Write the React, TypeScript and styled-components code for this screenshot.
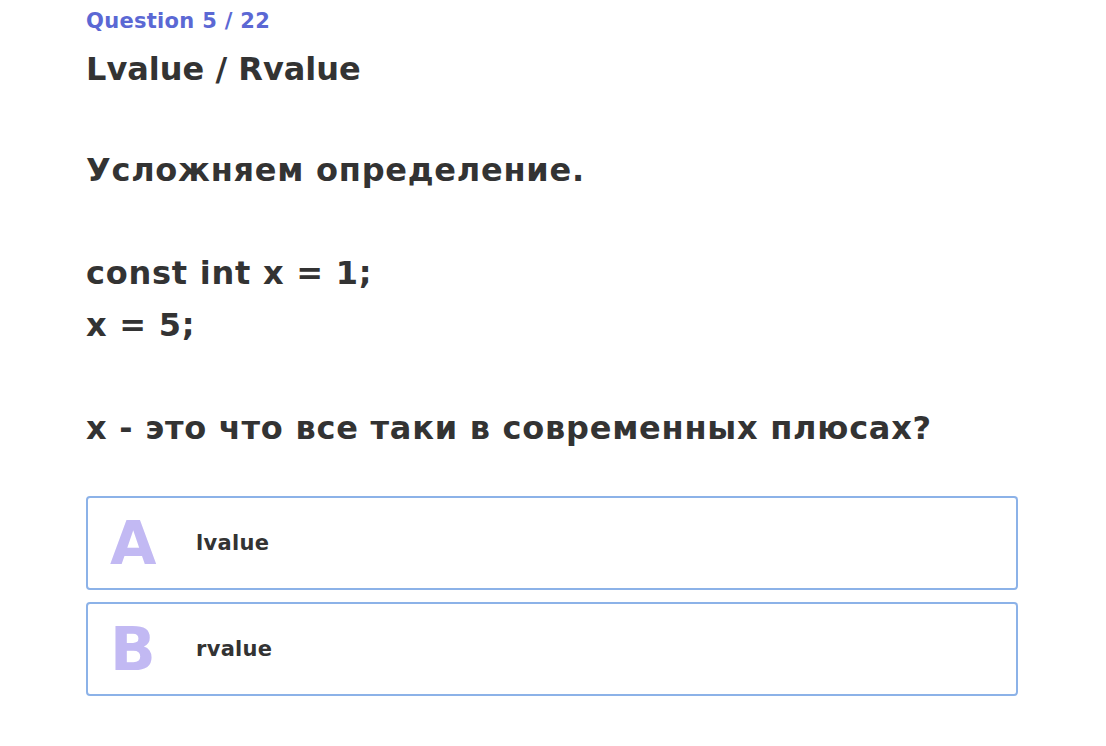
import React from "react";
import styled, { createGlobalStyle } from "styled-components";

const GlobalStyle = createGlobalStyle`
  html, body {
    margin: 0;
    padding: 0;
    background: #ffffff;
  }
  body {
    font-family: "DejaVu Sans", "Open Sans", sans-serif;
    color: #333333;
  }
`;

const Page = styled.main`
  width: 932px;
  padding: 6px 0 0 86px;
  display: flex;
  flex-direction: column;
`;

const Counter = styled.div`
  font-size: 21px;
  line-height: 30px;
  font-weight: 700;
  letter-spacing: 0.3px;
  color: #5b68d4;
`;

const Title = styled.h1`
  margin: 11px 0 0;
  font-size: 32px;
  line-height: 44px;
  font-weight: 700;
  color: #333333;
`;

const Body = styled.div`
  margin-top: 54px;
  font-size: 32px;
  line-height: 51.5px;
  font-weight: 700;
  letter-spacing: 0.75px;
  color: #333333;
  white-space: pre-line;
`;

const Options = styled.div`
  margin-top: 42px;
  display: flex;
  flex-direction: column;
  gap: 12px;
`;

const OptionCard = styled.button`
  box-sizing: border-box;
  width: 932px;
  height: 94px;
  display: flex;
  align-items: center;
  padding: 0 0 0 22px;
  background: #ffffff;
  border: 2px solid #8cb2e8;
  border-radius: 4px;
  font-family: inherit;
  cursor: pointer;
  text-align: left;
`;

const Letter = styled.span`
  width: 86px;
  font-size: 60px;
  line-height: 1;
  font-weight: 700;
  color: #c2b9f3;
`;

const Label = styled.span`
  font-size: 21px;
  font-weight: 700;
  letter-spacing: 0.3px;
  color: #333333;
`;

const options = [
  { letter: "A", text: "lvalue" },
  { letter: "B", text: "rvalue" },
];

export default function App() {
  return (
    <>
      <GlobalStyle />
      <Page>
        <Counter>Question 5 / 22</Counter>
        <Title>Lvalue / Rvalue</Title>
        <Body>
          {"Усложняем определение.\n\u00a0\nconst int x = 1;\nx = 5;\n\u00a0\nx - это что все таки в современных плюсах?"}
        </Body>
        <Options>
          {options.map((o) => (
            <OptionCard key={o.letter}>
              <Letter>{o.letter}</Letter>
              <Label>{o.text}</Label>
            </OptionCard>
          ))}
        </Options>
      </Page>
    </>
  );
}
